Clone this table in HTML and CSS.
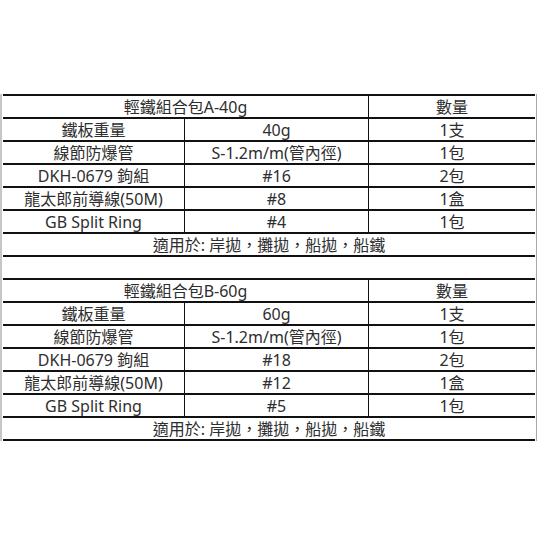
FILE: index.html
```html
<!DOCTYPE html>
<html lang="zh-Hant">
<head>
<meta charset="utf-8">
<title>輕鐵組合包</title>
<link rel="stylesheet" href="styles.css">
</head>
<body>
<div class="sheet">
  <div class="grid">
    <div class="cell span2">輕鐵組合包A-40g</div>
    <div class="cell bl">數量</div>

    <div class="cell">鐵板重量</div>
    <div class="cell bl">40g</div>
    <div class="cell bl">1支</div>

    <div class="cell">線節防爆管</div>
    <div class="cell bl">S-1.2m/m(管內徑)</div>
    <div class="cell bl">1包</div>

    <div class="cell">DKH-0679 鉤組</div>
    <div class="cell bl">#16</div>
    <div class="cell bl">2包</div>

    <div class="cell">龍太郎前導線(50M)</div>
    <div class="cell bl">#8</div>
    <div class="cell bl">1盒</div>

    <div class="cell">GB Split Ring</div>
    <div class="cell bl">#4</div>
    <div class="cell bl">1包</div>

    <div class="cell span3">適用於: 岸拋，攤拋，船拋，船鐵</div>

    <div class="cell span3"></div>

    <div class="cell span2">輕鐵組合包B-60g</div>
    <div class="cell bl">數量</div>

    <div class="cell">鐵板重量</div>
    <div class="cell bl">60g</div>
    <div class="cell bl">1支</div>

    <div class="cell">線節防爆管</div>
    <div class="cell bl">S-1.2m/m(管內徑)</div>
    <div class="cell bl">1包</div>

    <div class="cell">DKH-0679 鉤組</div>
    <div class="cell bl">#18</div>
    <div class="cell bl">2包</div>

    <div class="cell">龍太郎前導線(50M)</div>
    <div class="cell bl">#12</div>
    <div class="cell bl">1盒</div>

    <div class="cell">GB Split Ring</div>
    <div class="cell bl">#5</div>
    <div class="cell bl">1包</div>

    <div class="cell span3">適用於: 岸拋，攤拋，船拋，船鐵</div>
  </div>
</div>
</body>
</html>
```
FILE: styles.css
```css
html, body {
  margin: 0;
  padding: 0;
  background: #ffffff;
}

body {
  width: 537px;
  height: 537px;
  overflow: hidden;
  font-family: "Noto Sans", "Noto Sans CJK TC", sans-serif;
  font-size: 16px;
  font-weight: 400;
  color: #2e2e2e;
}

.sheet {
  margin-top: 94px;
  width: 537px;
  box-sizing: border-box;
  border-left: 2px solid #c6c6c6;
  border-right: 1px solid #a8a8a8;
  padding-left: 1px;
  padding-right: 1px;
}

.grid {
  display: grid;
  grid-template-columns: 181px 184px 167px;
  border-bottom: 2px solid #111111;
}

.cell {
  box-sizing: border-box;
  height: 23px;
  line-height: 22px;
  border-top: 2px solid #111111;
  text-align: center;
  white-space: nowrap;
  overflow: hidden;
}

.bl {
  border-left: 1px solid #111111;
}

.span2 {
  grid-column: span 2;
}

.span3 {
  grid-column: 1 / -1;
}
```
